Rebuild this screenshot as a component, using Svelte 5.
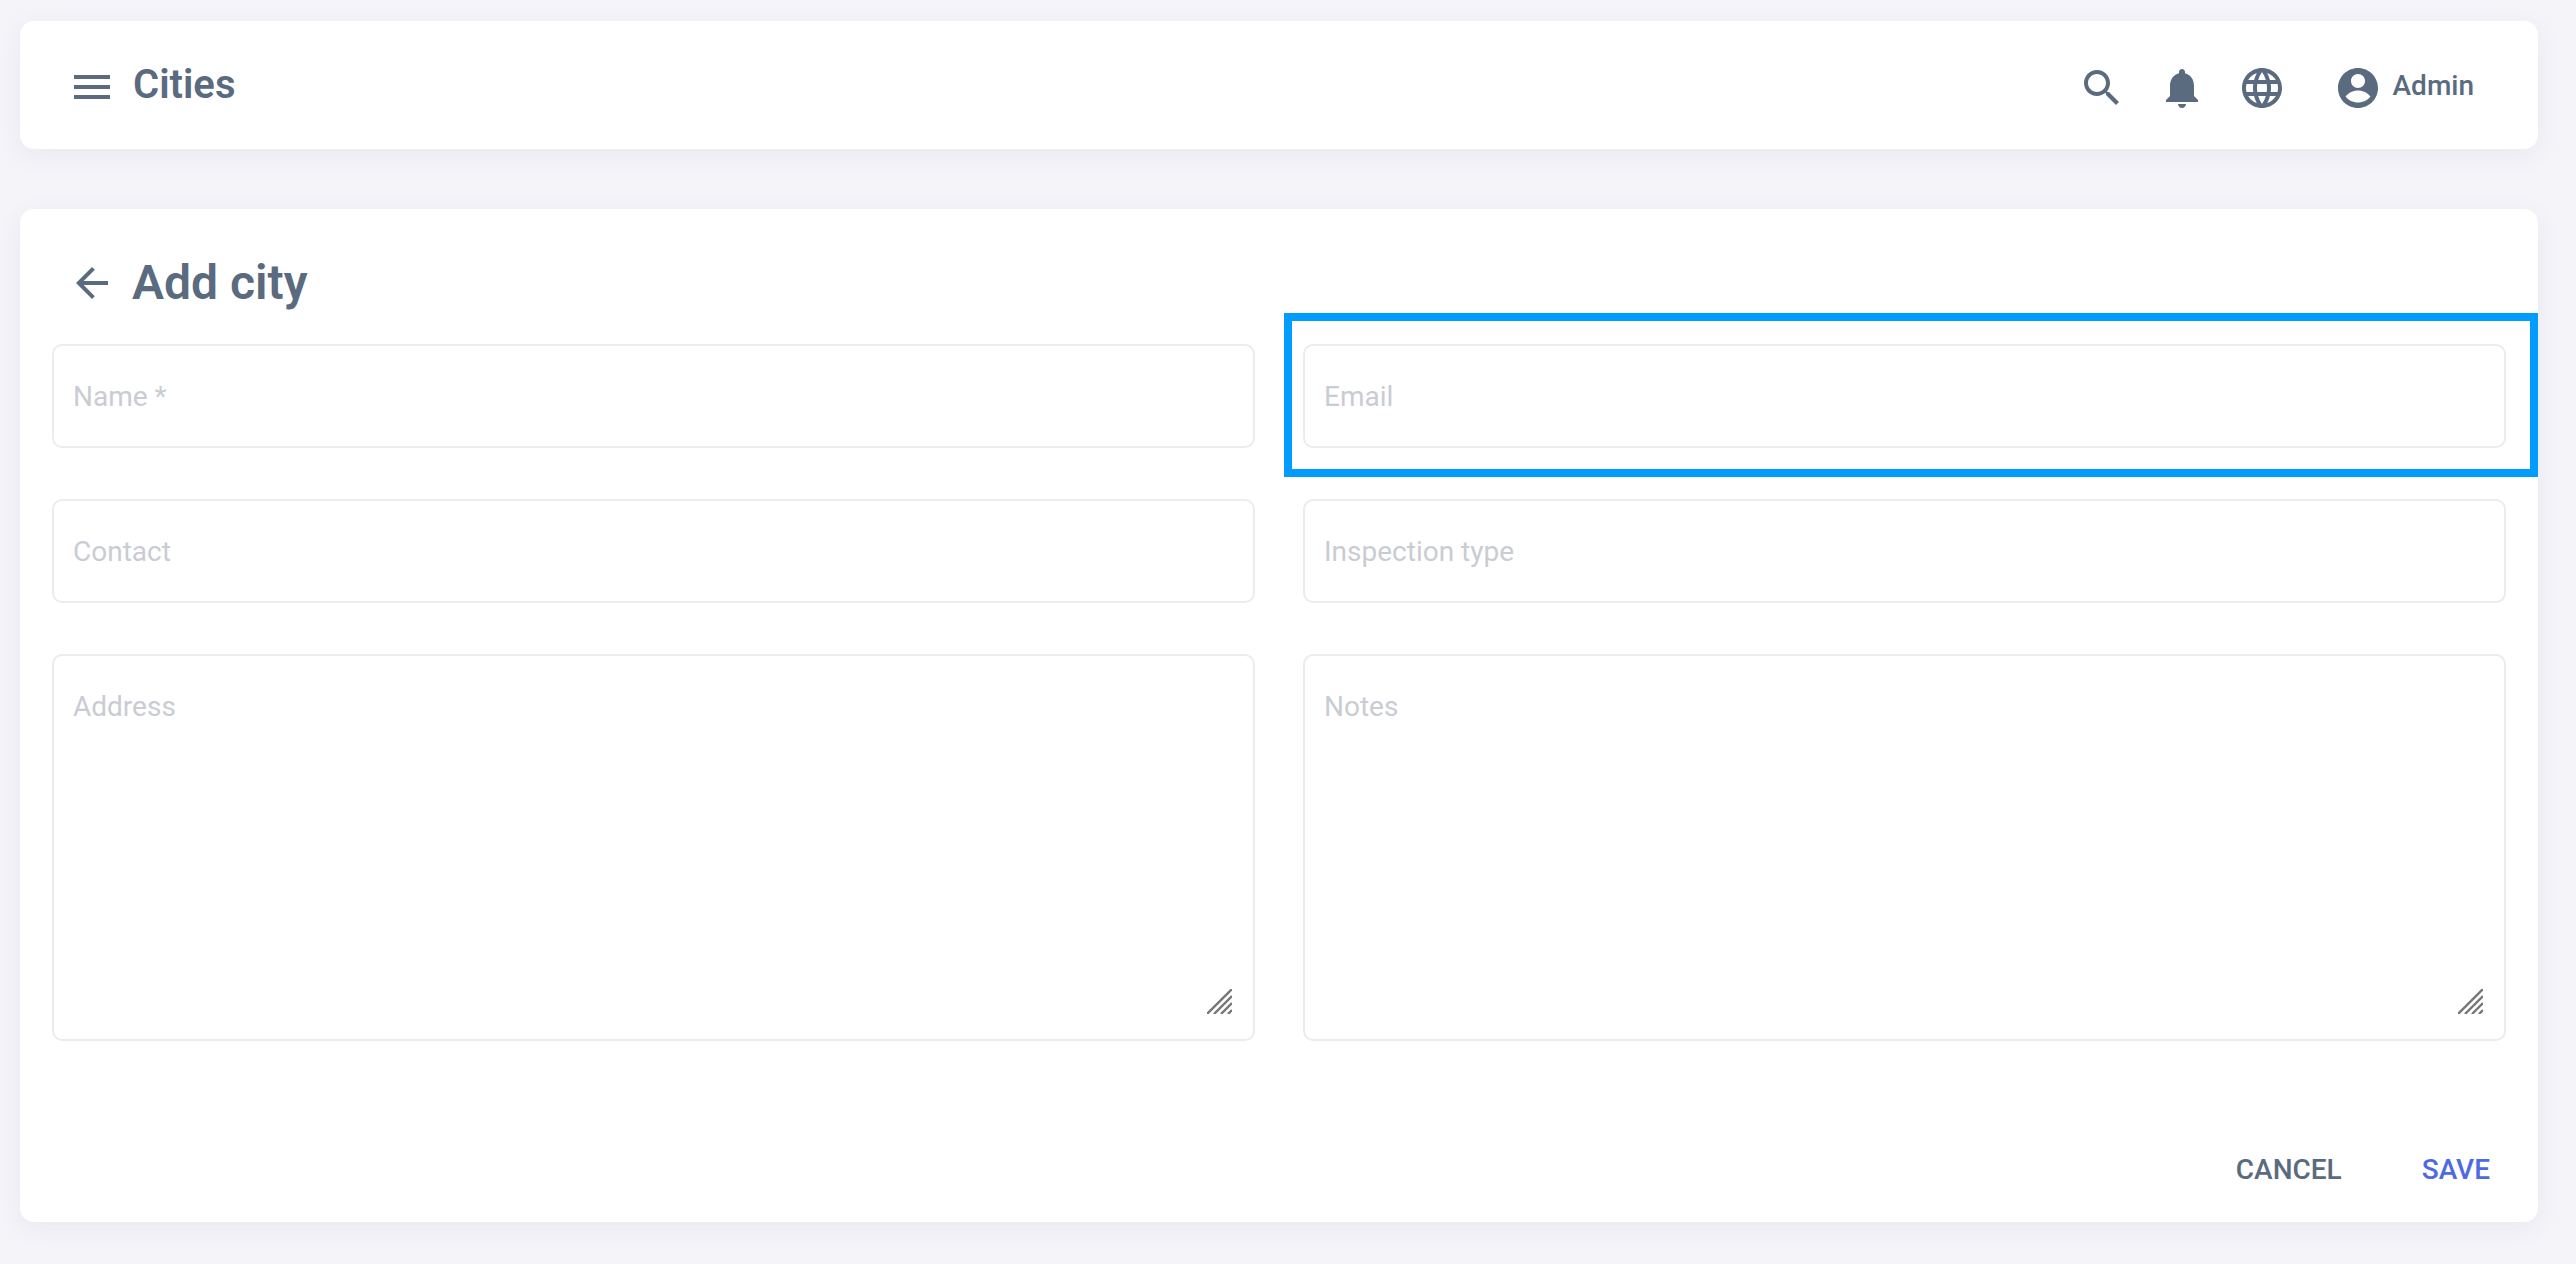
<script lang="ts">
	type Field = {
		name: string
		label: string
		multiline?: boolean
		highlighted?: boolean
	}

	const FIELDS: readonly Field[] = [
		{ name: 'name', label: 'Name *' },
		{ name: 'email', label: 'Email', highlighted: true },
		{ name: 'contact', label: 'Contact' },
		{ name: 'inspection_type', label: 'Inspection type' },
		{ name: 'address', label: 'Address', multiline: true },
		{ name: 'notes', label: 'Notes', multiline: true },
	]

	const ICONS = {
		menu: 'M3 18h18v-2H3v2zm0-5h18v-2H3v2zm0-7v2h18V6H3z',
		back: 'M20 11H7.83l5.59-5.59L12 4l-8 8 8 8 1.41-1.41L7.83 13H20v-2z',
		search:
			'M15.5 14h-.79l-.28-.27C15.41 12.59 16 11.11 16 9.5 16 5.91 13.09 3 9.5 3S3 5.91 3 9.5 5.91 16 9.5 16c1.61 0 3.09-.59 4.23-1.57l.27.28v.79l5 4.99L20.49 19l-4.99-5zm-6 0C7.01 14 5 11.99 5 9.5S7.01 5 9.5 5 14 7.01 14 9.5 11.99 14 9.5 14z',
		bell: 'M12 22c1.1 0 2-.9 2-2h-4c0 1.1.89 2 2 2zm6-6v-5c0-3.07-1.64-5.64-4.5-6.32V4c0-.83-.67-1.5-1.5-1.5s-1.5.67-1.5 1.5v.68C7.63 5.36 6 7.92 6 11v5l-2 2v1h16v-1l-2-2z',
		language:
			'M11.99 2C6.47 2 2 6.48 2 12s4.47 10 9.99 10C17.52 22 22 17.52 22 12S17.52 2 11.99 2zm6.93 6h-2.95c-.32-1.25-.78-2.45-1.38-3.56 1.84.63 3.37 1.91 4.33 3.56zM12 4.04c.83 1.2 1.48 2.53 1.91 3.96h-3.82c.43-1.43 1.08-2.76 1.91-3.96zM4.26 14C4.1 13.36 4 12.69 4 12s.1-1.36.26-2h3.38c-.08.66-.14 1.32-.14 2 0 .68.06 1.34.14 2H4.26zm.82 2h2.95c.32 1.25.78 2.45 1.38 3.56-1.84-.63-3.37-1.9-4.33-3.56zm2.95-8H5.08c.96-1.66 2.49-2.93 4.33-3.56C8.81 5.55 8.35 6.75 8.03 8zM12 19.96c-.83-1.2-1.48-2.53-1.91-3.96h3.82c-.43 1.43-1.08 2.76-1.91 3.96zM14.34 14H9.66c-.09-.66-.16-1.32-.16-2 0-.68.07-1.35.16-2h4.68c.09.65.16 1.32.16 2 0 .68-.07 1.34-.16 2zm.25 5.56c.6-1.11 1.06-2.31 1.38-3.56h2.95c-.96 1.65-2.49 2.93-4.33 3.56zM16.36 14c.08-.66.14-1.32.14-2 0-.68-.06-1.34-.14-2h3.38c.16.64.26 1.31.26 2s-.1 1.36-.26 2h-3.38z',
		account:
			'M12 2C6.48 2 2 6.48 2 12s4.48 10 10 10 10-4.48 10-10S17.52 2 12 2zm0 3c1.93 0 3.5 1.57 3.5 3.5S13.93 12 12 12s-3.5-1.57-3.5-3.5S10.07 5 12 5zm0 14.2c-2.5 0-4.9-1.1-6.2-3 1.4-1.9 3.7-3 6.2-3s4.8 1.1 6.2 3c-1.3 1.9-3.7 3-6.2 3z',
	}
</script>

<div class="page">
	<header class="card topbar">
		<div class="topbar-left">
			<svg class="icon" viewBox="0 0 24 24"><path d={ICONS.menu} /></svg>
			<span class="topbar-title">Cities</span>
		</div>
		<div class="topbar-right">
			<svg class="icon" viewBox="0 0 24 24"><path d={ICONS.search} /></svg>
			<svg class="icon" viewBox="0 0 24 24"><path d={ICONS.bell} /></svg>
			<svg class="icon" viewBox="0 0 24 24"><path d={ICONS.language} /></svg>
			<div class="user">
				<svg class="icon" viewBox="0 0 24 24"><path d={ICONS.account} fill-rule="evenodd" /></svg>
				<span class="user-name">Admin</span>
			</div>
		</div>
	</header>

	<main class="card form-card">
		<div class="form-head">
			<svg class="icon" viewBox="0 0 24 24"><path d={ICONS.back} /></svg>
			<h1>Add city</h1>
		</div>

		<form class="form-grid">
			{#each FIELDS as field (field.name)}
				<div class="field" class:multiline={field.multiline}>
					{#if field.multiline}
						<textarea id={field.name}></textarea>
						<svg class="resizer" viewBox="0 0 25 25" aria-hidden="true">
							<path d="M0 25 25 0M7 25 25 7M14 25 25 14M21 25 25 21" />
						</svg>
					{:else}
						<input id={field.name} type="text" />
					{/if}
					<label for={field.name}>{field.label}</label>
					{#if field.highlighted}
						<div class="highlight"></div>
					{/if}
				</div>
			{/each}
		</form>

		<div class="actions">
			<button type="button" class="btn">CANCEL</button>
			<button type="button" class="btn primary">SAVE</button>
		</div>
	</main>
</div>

<style>
	:global(body) {
		background: #f4f4f9;
		font-family: Roboto, 'Liberation Sans', sans-serif;
	}

	.page {
		box-sizing: border-box;
		min-height: 1264px;
		padding: 21px 38px 42px 20px;
		color: #5a6a7f;
	}

	.card {
		background: #fff;
		border-radius: 14px;
		box-shadow: 0 6px 24px rgba(90, 90, 130, 0.07);
	}

	.icon {
		display: block;
		width: 48px;
		height: 48px;
		flex: none;
		fill: currentColor;
	}

	.topbar {
		display: flex;
		align-items: center;
		justify-content: space-between;
		box-sizing: border-box;
		height: 128px;
		padding: 4px 32px 0 48px;
	}

	.topbar-left {
		display: flex;
		align-items: center;
		gap: 17px;
	}

	.topbar-title {
		font-size: 40px;
		font-weight: 600;
		margin-top: -5px;
	}

	.topbar-right {
		display: flex;
		align-items: center;
		gap: 32px;
		margin-top: 2px;
	}

	.user {
		display: flex;
		align-items: center;
		gap: 11px;
		margin-left: 16px;
		padding-right: 32px;
		font-size: 28px;
		font-weight: 500;
	}

	.user-name {
		margin-top: -5px;
	}

	.form-card {
		margin-top: 60px;
		padding: 50px 32px 0;
		height: 1013px;
		box-sizing: border-box;
	}

	.form-head {
		display: flex;
		align-items: center;
		gap: 16px;
		padding-left: 16px;
		height: 48px;
	}

	h1 {
		margin: -2px 0 0;
		font-size: 48px;
		font-weight: 600;
	}

	.form-grid {
		display: grid;
		grid-template-columns: 1fr 1fr;
		gap: 51px 48px;
		margin-top: 37px;
	}

	.field {
		position: relative;
		height: 104px;
	}

	.field.multiline {
		height: 387px;
	}

	input,
	textarea {
		display: block;
		box-sizing: border-box;
		width: 100%;
		height: 100%;
		margin: 0;
		padding: 0 21px;
		background: transparent;
		border: 2px solid #ececef;
		border-radius: 10px;
		outline: none;
		resize: none;
	}

	label {
		position: absolute;
		left: 21px;
		top: 0;
		line-height: 105px;
		font-size: 28px;
		color: #c9ccd3;
	}

	.resizer {
		position: absolute;
		right: 23px;
		bottom: 27px;
		width: 25px;
		height: 25px;
		fill: none;
		stroke: #777;
		stroke-width: 2.4;
	}

	.highlight {
		position: absolute;
		inset: -31px -32px -29px -19px;
		border: 8px solid #009dff;
		pointer-events: none;
	}

	.actions {
		display: flex;
		justify-content: flex-end;
		gap: 48px;
		margin-top: 92px;
	}

	.btn {
		padding: 0 16px;
		height: 72px;
		background: none;
		border: none;
		font: 500 28px Roboto, 'Liberation Sans', sans-serif;
		color: #5a6a7f;
	}

	.btn.primary {
		color: #4d69e3;
	}
</style>
